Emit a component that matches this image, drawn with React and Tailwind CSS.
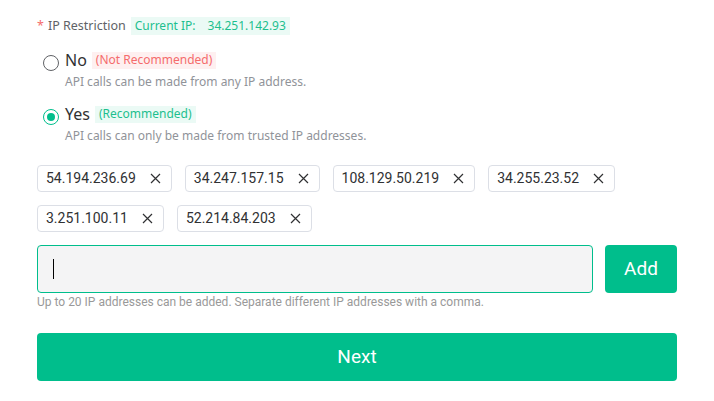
import React, { useState } from 'react';

const ips = [
  '54.194.236.69',
  '34.247.157.15',
  '108.129.50.219',
  '34.255.23.52',
  '3.251.100.11',
  '52.214.84.203',
];

const CloseIcon = () => (
  <svg width="11" height="11" viewBox="0 0 11 11" fill="none">
    <path d="M1 1L10 10M10 1L1 10" stroke="#303133" strokeWidth="1.2" />
  </svg>
);

const Radio = ({ checked }) => (
  <span
    className={
      checked
        ? 'mt-[6px] flex h-[16px] w-[16px] shrink-0 items-center justify-center rounded-full border border-[#00be8c] bg-white'
        : 'mt-[6px] flex h-[16px] w-[16px] shrink-0 items-center justify-center rounded-full border border-[#606266] bg-white'
    }
  >
    {checked && <span className="h-[8px] w-[8px] rounded-full bg-[#00be8c]" />}
  </span>
);

const App = () => {
  const [restricted, setRestricted] = useState(true);

  return (
    <div className="h-[401px] w-[714px] bg-white pl-[37px] pt-[17px] font-['Noto_Sans',sans-serif]">
      <div className="flex h-[18px] items-center text-[12.5px] text-[#606266]">
        <span className="mr-[4px] text-[#f56c6c]">*</span>
        <span>IP Restriction</span>
        <span className="ml-[5px] flex h-[18px] items-center bg-[#ebfaf5] px-[4px] text-[12px] text-[#1dbf8e]">
          Current IP:<span className="ml-[12px]">34.251.142.93</span>
        </span>
      </div>

      <div className="ml-[6px] mt-[14px] flex cursor-pointer" onClick={() => setRestricted(false)}>
        <Radio checked={!restricted} />
        <div className="ml-[6px]">
          <div className="flex h-[22px] items-center">
            <span className="text-[16px] text-[#303133]">No</span>
            <span className="ml-[5px] flex h-[17px] items-center bg-[#fef0f0] px-[4px] text-[12px] text-[#f56c6c]">
              (Not Recommended)
            </span>
          </div>
          <div className="mt-[2px] text-[12px] leading-[18px] text-[#909399]">
            API calls can be made from any IP address.
          </div>
        </div>
      </div>

      <div className="ml-[6px] mt-[12px] flex cursor-pointer" onClick={() => setRestricted(true)}>
        <Radio checked={restricted} />
        <div className="ml-[6px]">
          <div className="flex h-[22px] items-center">
            <span className="text-[16px] text-[#303133]">Yes</span>
            <span className="ml-[5px] flex h-[17px] items-center bg-[#ebfaf5] px-[4px] text-[12px] text-[#1dbf8e]">
              (Recommended)
            </span>
          </div>
          <div className="mt-[2px] text-[12px] leading-[18px] text-[#909399]">
            API calls can only be made from trusted IP addresses.
          </div>
        </div>
      </div>

      <div className="mt-[20px] flex w-[640px] flex-wrap gap-[13px] font-['Roboto',sans-serif]">
        {ips.map((ip) => (
          <div
            key={ip}
            className="flex h-[27px] items-center rounded-[4px] border border-[#dcdfe6] pl-[8px] pr-[10px] text-[14px] text-[#303133]"
          >
            <span>{ip}</span>
            <span className="ml-[14px] flex">
              <CloseIcon />
            </span>
          </div>
        ))}
      </div>

      <div className="mt-[13px] flex w-[640px] gap-[12px] font-['Roboto',sans-serif]">
        <div className="flex h-[48px] flex-1 items-center rounded-[4px] border border-[#00be8c] bg-[#f4f4f5] pl-[15px]">
          <span className="h-[20px] w-px bg-black" />
        </div>
        <button className="h-[48px] w-[72px] rounded-[4px] bg-[#00be8c] text-[19px] text-white">Add</button>
      </div>

      <div className="mt-[1px] text-[12px] leading-[16px] text-[#999999] font-['Roboto',sans-serif]">
        Up to 20 IP addresses can be added. Separate different IP addresses with a comma.
      </div>

      <button className="mt-[23px] h-[48px] w-[640px] rounded-[4px] bg-[#00be8c] text-[19px] text-white font-['Roboto',sans-serif]">
        Next
      </button>
    </div>
  );
};

export default App;
